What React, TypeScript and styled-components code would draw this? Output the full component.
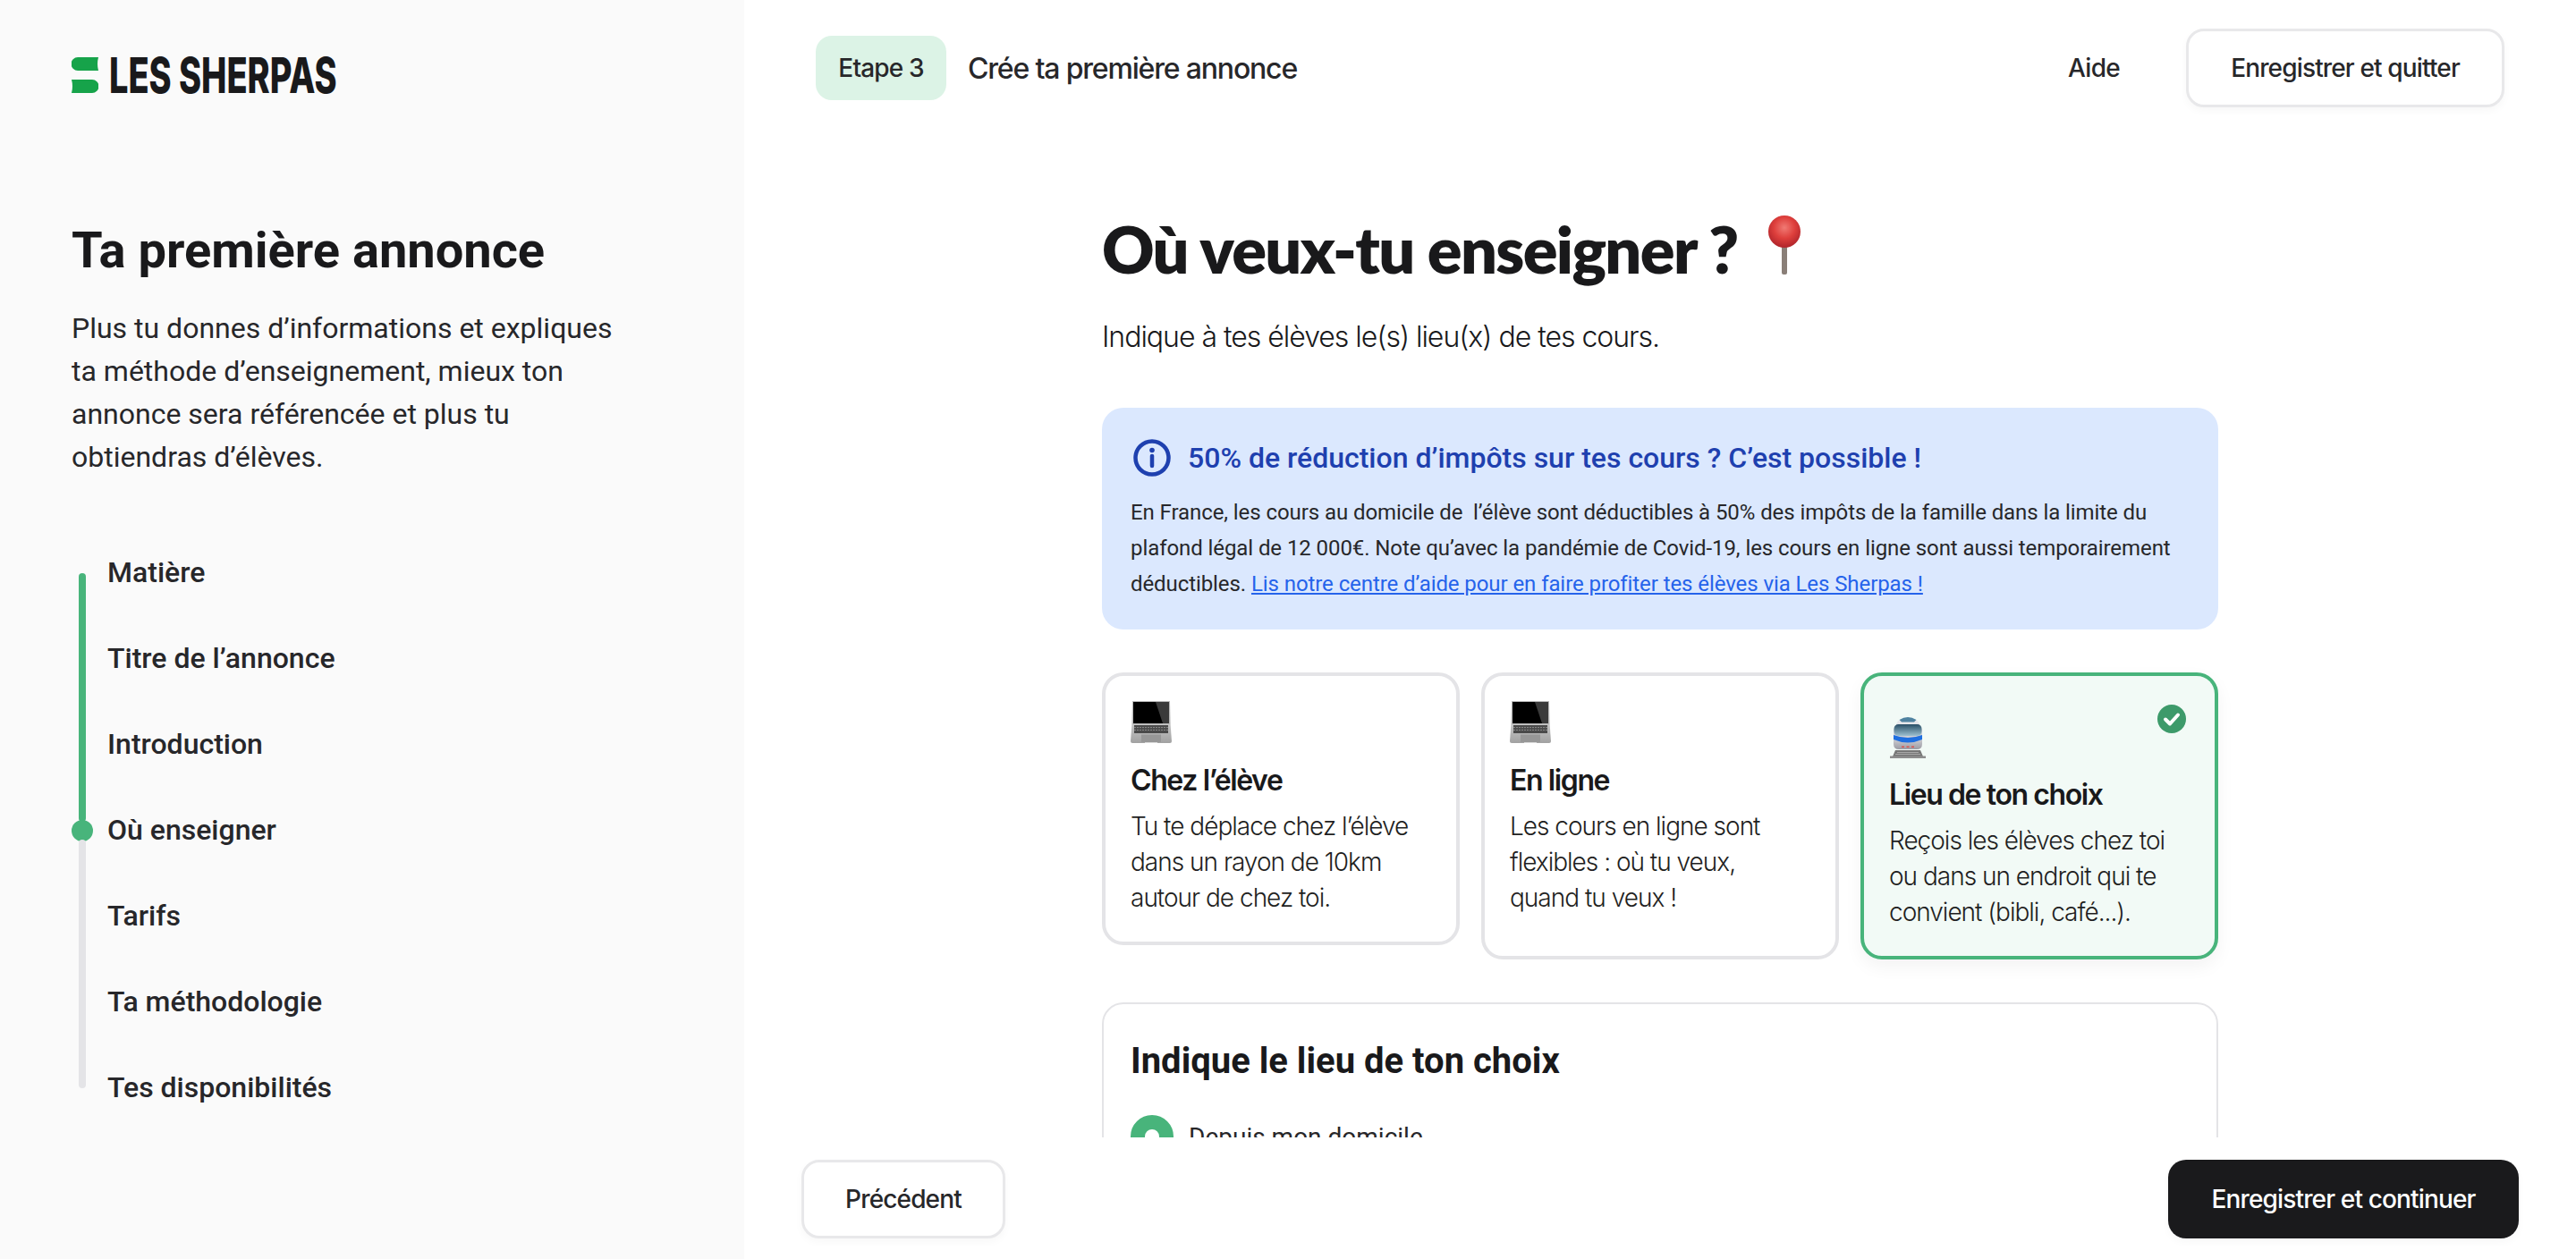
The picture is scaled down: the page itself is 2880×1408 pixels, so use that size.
import { createGlobalStyle, styled } from "styled-components";

const GlobalStyle = createGlobalStyle`
  html, body {
    margin: 0;
    padding: 0;
    background: #ffffff;
  }
  * {
    box-sizing: border-box;
  }
`;

const Page = styled.div`
  display: flex;
  width: 2880px;
  height: 1408px;
  overflow: hidden;
  background: #ffffff;
  color: #19191b;
  font-family: "Inter", "Liberation Sans", sans-serif;
`;

const Sidebar = styled.aside`
  flex: 0 0 832px;
  padding: 64px 80px 0;
  background: #fafafa;
  font-family: "Roboto", "Liberation Sans", sans-serif;
`;

const Logo = styled.div`
  display: flex;
  align-items: center;
  gap: 12px;
  height: 40px;
`;

const LogoText = styled.span`
  font-family: "Inter", "Liberation Sans", sans-serif;
  font-size: 55px;
  font-weight: 800;
  line-height: 40px;
  color: #19191b;
  transform: scaleX(0.69);
  transform-origin: left center;
  white-space: nowrap;
`;

const SideTitle = styled.h2`
  margin: 142px 0 0;
  font-size: 56px;
  line-height: 68px;
  font-weight: 700;
  color: #19191b;
`;

const SideText = styled.p`
  margin: 29px 0 0;
  width: 640px;
  font-size: 32px;
  line-height: 48px;
  font-weight: 400;
  color: #27272a;
`;

const Stepper = styled.div`
  display: flex;
  gap: 16px;
  margin-top: 57px;
`;

const Track = styled.div`
  display: flex;
  flex-direction: column;
  align-items: center;
  flex: 0 0 24px;
  padding-top: 49px;
`;

const TrackBar = styled.div<{ $done?: boolean; $length: number }>`
  width: 8px;
  height: ${(p) => p.$length}px;
  border-radius: 4px;
  background: ${(p) => (p.$done ? "#48b47b" : "#e4e4e7")};
`;

const TrackDot = styled.div`
  width: 24px;
  height: 24px;
  border-radius: 50%;
  margin: -2px 0;
  background: #48b47b;
`;

const StepList = styled.ul`
  margin: 0;
  padding: 0;
  list-style: none;
`;

const Step = styled.li`
  height: 96px;
  font-size: 32px;
  line-height: 96px;
  font-weight: 500;
  color: #27272a;
`;

const Main = styled.main`
  flex: 1;
  display: flex;
  flex-direction: column;
  min-width: 0;
`;

const TopBar = styled.header`
  display: flex;
  align-items: center;
  flex: 0 0 152px;
  padding: 0 80px;
`;

const StepBadge = styled.span`
  display: flex;
  align-items: center;
  justify-content: center;
  width: 146px;
  height: 72px;
  border-radius: 18px;
  background: #dcf3e6;
  font-size: 28px;
  font-weight: 550;
  letter-spacing: -0.85px;
  color: #27272a;
`;

const TopTitle = styled.span`
  margin-left: 24px;
  font-size: 32px;
  font-weight: 550;
  letter-spacing: -1.18px;
  color: #27272a;
`;

const TopActions = styled.div`
  display: flex;
  align-items: center;
  gap: 74px;
  margin-left: auto;
`;

const HelpLink = styled.a`
  font-size: 28px;
  font-weight: 550;
  letter-spacing: -0.7px;
  color: #27272a;
`;

const Button = styled.button<{ $dark?: boolean; $width: number }>`
  width: ${(p) => p.$width}px;
  height: 88px;
  border-radius: 20px;
  border: ${(p) => (p.$dark ? "0" : "3px solid #e8e8ea")};
  background: ${(p) => (p.$dark ? "#1a1a1c" : "#ffffff")};
  box-shadow: 0 4px 10px rgba(0, 0, 0, 0.03);
  color: ${(p) => (p.$dark ? "#ffffff" : "#27272a")};
  font-family: "Inter", "Liberation Sans", sans-serif;
  font-size: 28px;
  font-weight: 550;
  letter-spacing: -0.85px;
`;

const Scroller = styled.div`
  flex: 1;
  min-height: 0;
  overflow: hidden;
  padding-left: 400px;
`;

const Column = styled.div`
  width: 1248px;
`;

const Heading = styled.h1`
  display: flex;
  align-items: flex-start;
  margin: 80px 0 0;
  height: 92px;
  font-family: "Lato", "Inter", sans-serif;
  font-size: 72px;
  line-height: 92px;
  font-weight: 800;
  letter-spacing: -1.65px;
  color: #19191b;
`;

const PinIcon = styled.svg`
  flex: none;
  margin: 9px 0 0 32px;
`;

const Lead = styled.p`
  margin: 29px 0 0;
  font-size: 32px;
  line-height: 48px;
  font-weight: 300;
  letter-spacing: -1.02px;
  color: #19191b;
`;

const InfoBox = styled.section`
  margin-top: 55px;
  height: 248px;
  padding: 32px 32px 0;
  border-radius: 24px;
  background: #dbe8fe;
  font-family: "Roboto", "Liberation Sans", sans-serif;
`;

const InfoHead = styled.div`
  display: flex;
  align-items: center;
  gap: 18px;
  height: 48px;
  font-size: 32px;
  font-weight: 500;
  color: #1e40af;
`;

const InfoIcon = styled.svg`
  flex: none;
  margin-left: 2px;
`;

const InfoText = styled.p`
  margin: 17px 0 0;
  font-size: 24px;
  line-height: 40px;
  letter-spacing: -0.08px;
  color: #27272a;
`;

const InfoLink = styled.a`
  color: #2563eb;
  text-decoration: underline;
`;

const Choices = styled.div`
  display: grid;
  grid-template-columns: repeat(3, 400px);
  gap: 24px;
  margin-top: 48px;
`;

const Card = styled.div<{ $selected?: boolean; $compact?: boolean }>`
  position: relative;
  align-self: ${(p) => (p.$compact ? "start" : "stretch")};
  padding: ${(p) => (p.$selected ? "49px" : "28px")} 28px 29px;
  border: 4px solid ${(p) => (p.$selected ? "#48b47b" : "#e4e4e7")};
  border-radius: 24px;
  background: ${(p) => (p.$selected ? "#f2faf6" : "#ffffff")};
  box-shadow: ${(p) => (p.$selected ? "0 8px 20px rgba(0, 0, 0, 0.05)" : "none")};
`;

const CardCheck = styled.svg`
  position: absolute;
  top: 32px;
  right: 32px;
`;

const CardEmoji = styled.svg<{ $raised?: boolean }>`
  display: block;
  margin-top: ${(p) => (p.$raised ? "-5px" : "0")};
  margin-bottom: ${(p) => (p.$raised ? "5px" : "0")};
`;

const CardTitle = styled.h3`
  margin: 21px 0 0;
  font-size: 32px;
  line-height: 40px;
  font-weight: 600;
  letter-spacing: -1.4px;
  color: #19191b;
`;

const CardText = styled.p`
  margin: 11px 0 0;
  font-size: 28px;
  line-height: 40px;
  font-weight: 300;
  letter-spacing: -1px;
  color: #1f1f22;
`;

const PlacePanel = styled.section`
  margin-top: 48px;
  height: 400px;
  padding: 34px 30px;
  border: 2px solid #e4e4e7;
  border-radius: 24px;
  font-family: "Roboto", "Liberation Sans", sans-serif;
`;

const PlaceTitle = styled.h3`
  margin: 0;
  font-size: 40px;
  line-height: 60px;
  font-weight: 700;
  color: #19191b;
`;

const RadioRow = styled.label`
  display: flex;
  align-items: center;
  gap: 17px;
  margin-top: 30px;
  font-size: 28px;
  color: #27272a;
`;

const RadioMark = styled.span`
  width: 48px;
  height: 48px;
  border-radius: 50%;
  border: 16px solid #48b47b;
  background: #ffffff;
`;

const BottomBar = styled.footer`
  display: flex;
  align-items: flex-start;
  justify-content: space-between;
  flex: 0 0 136px;
  padding: 25px 64px 0;
  background: #ffffff;
`;

const steps = [
  "Matière",
  "Titre de l’annonce",
  "Introduction",
  "Où enseigner",
  "Tarifs",
  "Ta méthodologie",
  "Tes disponibilités",
];

function LaptopEmoji() {
  return (
    <CardEmoji width="46" height="48" viewBox="0 0 46 48">
      <defs>
        <linearGradient id="lapBase" x1="0" y1="0" x2="0" y2="1">
          <stop offset="0" stopColor="#c4c4c4" />
          <stop offset="1" stopColor="#a2a2a2" />
        </linearGradient>
      </defs>
      <path d="M2 0h42l.6 26H1.4z" fill="#b9b9b9" />
      <path d="M3 1h40v24H3z" fill="#000" />
      <path d="M28 1h15v24h-7z" fill="#3a3a3a" />
      <path d="M1.4 26h43.2L46 45q0 2-2 2H2q-2 0-2-2z" fill="url(#lapBase)" />
      <path d="M4 27h38v9H4z" fill="#4a4a4a" />
      <path d="M4 29.6h38M4 32.4h38" stroke="#9a9a9a" strokeWidth="0.8" strokeDasharray="2 1" />
      <path d="M12 37.5h22V46H12z" fill="#979797" />
      <path d="M16 46.4h14V48H16z" fill="#fff" />
    </CardEmoji>
  );
}

function TrainEmoji() {
  return (
    <CardEmoji $raised width="42" height="48" viewBox="0 0 42 48">
      <defs>
        <linearGradient id="trainBody" x1="0" y1="0" x2="0" y2="1">
          <stop offset="0" stopColor="#f0f0f3" />
          <stop offset="0.7" stopColor="#c9c9cf" />
          <stop offset="1" stopColor="#9b9ba3" />
        </linearGradient>
        <linearGradient id="trainGlass" x1="0" y1="0" x2="0" y2="1">
          <stop offset="0" stopColor="#284e66" />
          <stop offset="1" stopColor="#9cc0d0" />
        </linearGradient>
      </defs>
      <path d="M7 39h28l3 7H4z" fill="#777" />
      <path d="M9 41.500h24M7 43.500h28" stroke="#b5b5b5" strokeWidth="0.8" />
      <path d="M1 45.500h40V48H1z" fill="#8d8d8d" />
      <path d="M10 6Q21-1 32 6l5 10v16q0 6-6 6H11q-6 0-6-6V16z" fill="url(#trainBody)" />
      <path d="M11.500 5Q21-1 30.500 5L28 7.500H14z" fill="#4f82a0" />
      <rect x="5.500" y="10" width="31" height="13" rx="5" fill="url(#trainGlass)" />
      <path d="M5 22q16 6 32 0v5q-16 7-32 0z" fill="#1f6fe0" />
      <path d="M14 34.500h3V36h-3zM19.500 34.500h3V36h-3zM25 34.500h3V36h-3z" fill="#d9534f" />
    </CardEmoji>
  );
}

export default function App() {
  return (
    <Page>
      <GlobalStyle />
      <Sidebar>
        <Logo>
          <svg width="30" height="40" viewBox="0 0 30 40">
            <path d="M7 0h23q-2 7.500 0 15H7a7.500 7.500 0 0 1 0-15z" fill="#16a34a" />
            <path d="M0 25h23a7.500 7.500 0 0 1 0 15H0q2-7.500 0-15z" fill="#16a34a" />
          </svg>
          <LogoText>LES SHERPAS</LogoText>
        </Logo>
        <SideTitle>Ta première annonce</SideTitle>
        <SideText>
          Plus tu donnes d’informations et expliques ta méthode d’enseignement, mieux ton annonce
          sera référencée et plus tu obtiendras d’élèves.
        </SideText>
        <Stepper>
          <Track>
            <TrackBar $done $length={278} />
            <TrackDot />
            <TrackBar $length={278} />
          </Track>
          <StepList>
            {steps.map((step) => (
              <Step key={step}>{step}</Step>
            ))}
          </StepList>
        </Stepper>
      </Sidebar>
      <Main>
        <TopBar>
          <StepBadge>Etape 3</StepBadge>
          <TopTitle>Crée ta première annonce</TopTitle>
          <TopActions>
            <HelpLink>Aide</HelpLink>
            <Button $width={356}>Enregistrer et quitter</Button>
          </TopActions>
        </TopBar>
        <Scroller>
          <Column>
            <Heading>
              Où veux-tu enseigner ?
              <PinIcon width="40" height="68" viewBox="0 0 40 68">
                <defs>
                  <radialGradient id="pinBall" cx="0.5" cy="0.38" r="0.6">
                    <stop offset="0" stopColor="#f07a74" />
                    <stop offset="0.55" stopColor="#de3f3c" />
                    <stop offset="1" stopColor="#b3262c" />
                  </radialGradient>
                </defs>
                <rect x="17" y="30" width="6" height="36" rx="2" fill="#8a7f78" />
                <circle cx="20" cy="18" r="18" fill="url(#pinBall)" />
              </PinIcon>
            </Heading>
            <Lead>Indique à tes élèves le(s) lieu(x) de tes cours.</Lead>
            <InfoBox>
              <InfoHead>
                <InfoIcon width="44" height="44" viewBox="0 0 44 44" fill="none" stroke="#1e40af">
                  <circle cx="22" cy="22" r="18.500" strokeWidth="4.500" />
                  <path d="M22 20v11" strokeWidth="4.500" strokeLinecap="round" />
                  <circle cx="22" cy="13.500" r="2.800" fill="#1e40af" stroke="none" />
                </InfoIcon>
                50% de réduction d’impôts sur tes cours ? C’est possible !
              </InfoHead>
              <InfoText>
                En France, les cours au domicile de&nbsp; l’élève sont déductibles à 50% des impôts
                de la famille dans la limite du plafond légal de 12 000€. Note qu’avec la pandémie
                de Covid-19, les cours en ligne sont aussi temporairement déductibles.{" "}
                <InfoLink>Lis notre centre d’aide pour en faire profiter tes élèves via Les Sherpas !</InfoLink>
              </InfoText>
            </InfoBox>
            <Choices>
              <Card $compact>
                <LaptopEmoji />
                <CardTitle>Chez l’élève</CardTitle>
                <CardText>Tu te déplace chez l’élève dans un rayon de 10km autour de chez toi.</CardText>
              </Card>
              <Card>
                <LaptopEmoji />
                <CardTitle>En ligne</CardTitle>
                <CardText>Les cours en ligne sont flexibles : où tu veux, quand tu veux !</CardText>
              </Card>
              <Card $selected>
                <CardCheck width="32" height="32" viewBox="0 0 32 32">
                  <circle cx="16" cy="16" r="16" fill="#3d9a6a" />
                  <path d="M9 16.500l5 5 9-10" fill="none" stroke="#fff" strokeWidth="4" strokeLinecap="round" strokeLinejoin="round" />
                </CardCheck>
                <TrainEmoji />
                <CardTitle>Lieu de ton choix</CardTitle>
                <CardText>Reçois les élèves chez toi ou dans un endroit qui te convient (bibli, café...).</CardText>
              </Card>
            </Choices>
            <PlacePanel>
              <PlaceTitle>Indique le lieu de ton choix</PlaceTitle>
              <RadioRow>
                <RadioMark />
                Depuis mon domicile
              </RadioRow>
            </PlacePanel>
          </Column>
        </Scroller>
        <BottomBar>
          <Button $width={228}>Précédent</Button>
          <Button $dark $width={392}>Enregistrer et continuer</Button>
        </BottomBar>
      </Main>
    </Page>
  );
}
